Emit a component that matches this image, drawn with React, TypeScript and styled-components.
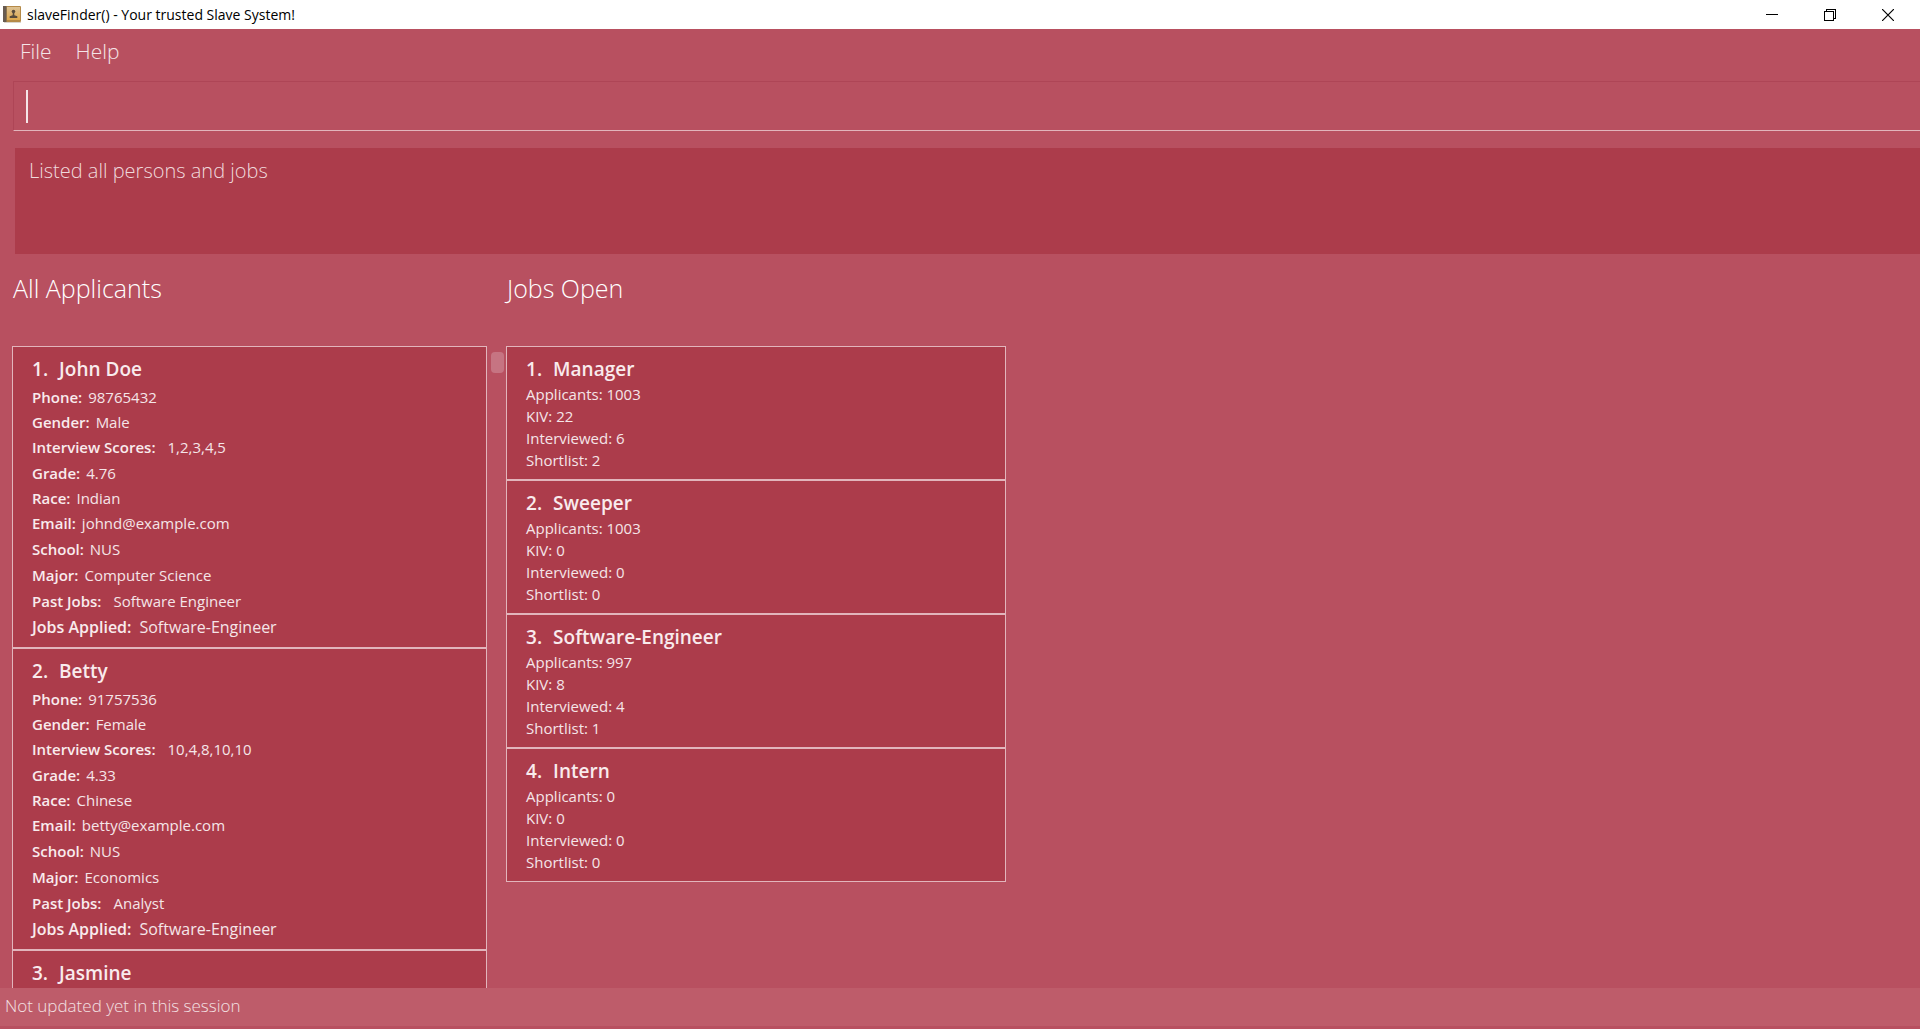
import React from "react";
import styled, { createGlobalStyle } from "styled-components";

const color = {
  base: "#b85060",
  panel: "#ac3c4b",
  status: "#be5c6a",
  line: "#e2b5bc",
  text: "#f5e5e8",
  strong: "#f9ebed",
  thumb: "#c67482",
};

const GlobalStyle = createGlobalStyle`
  *, *::before, *::after { box-sizing: border-box; }
  body {
    margin: 0;
    background: ${color.base};
    color: ${color.text};
    font-family: "Open Sans", "Noto Sans", sans-serif;
    font-size: 15px;
  }
  button, input { font: inherit; color: inherit; }
`;

const Window = styled.div`
  display: flex;
  flex-direction: column;
  height: 100vh;
  overflow: hidden;
`;

const TitleBar = styled.header`
  display: flex;
  align-items: center;
  flex: none;
  height: 29px;
  padding: 0 3px;
  background: #fff;
  color: #000;
`;

const AppTitle = styled.h1`
  flex: 1;
  margin: 0 0 0 6px;
  font-size: 14px;
  line-height: 28px;
  font-weight: 400;
`;

const WindowButton = styled.button`
  display: grid;
  place-items: center;
  width: 58px;
  height: 28px;
  padding: 0;
  border: 0;
  background: transparent;
`;

const MenuBar = styled.nav`
  display: flex;
  flex: none;
  gap: 24px;
  padding: 8px 20px 16px;
`;

const MenuButton = styled.button`
  padding: 0;
  border: 0;
  background: transparent;
  font-size: 21px;
  line-height: 28px;
  font-weight: 300;
`;

const CommandBox = styled.label`
  display: flex;
  align-items: center;
  flex: none;
  height: 50px;
  margin-left: 13px;
  padding-left: 12px;
  border: 1px solid #ae4556;
  border-right: 0;
  border-bottom-color: ${color.line};
`;

const Caret = styled.span`
  width: 2px;
  height: 33px;
  background: ${color.text};
`;

const CommandInput = styled.input`
  flex: 1;
  padding: 0;
  border: 0;
  outline: 0;
  background: transparent;
  font-size: 20px;
  font-weight: 300;
`;

const ResultDisplay = styled.output`
  display: block;
  flex: none;
  height: 106px;
  margin: 17px 0 0 15px;
  padding: 9px 14px;
  background: ${color.panel};
  color: #f0dadd;
  font-size: 20px;
  line-height: 28px;
  font-weight: 300;
`;

const Columns = styled.main`
  display: grid;
  grid-template-columns: 494fr 500fr 914fr;
  flex: 1;
  min-height: 0;
  padding-left: 12px;
`;

const Column = styled.section`
  display: flex;
  flex-direction: column;
  min-width: 0;
  min-height: 0;
`;

const ColumnTitle = styled.h2`
  flex: none;
  margin: 17px 0 40px;
  padding-left: 1px;
  color: #fff;
  font-size: 25px;
  line-height: 35px;
  font-weight: 300;
`;

const ListRow = styled.div`
  display: flex;
  flex: 1;
  min-height: 0;
`;

const CardList = styled.ol`
  flex: 1;
  margin: 0;
  padding: 0;
  overflow: hidden;
  list-style: none;
`;

const ScrollTrack = styled.div`
  width: 19px;
  padding: 6px 2px 0 4px;
`;

const ScrollThumb = styled.div`
  height: 21px;
  border-radius: 4px;
  background: ${color.thumb};
`;

const Card = styled.li`
  padding: 8px 19px 7px;
  border: 1px solid ${color.line};
  background: ${color.panel};
`;

const CardTitle = styled.h3<{ $gap: number }>`
  display: flex;
  gap: 11px;
  margin: 0 0 ${(p) => p.$gap}px;
  color: ${color.strong};
  font-size: 19px;
  line-height: 28px;
  font-weight: 600;
`;

const Fields = styled.dl`
  margin: 0;
`;

const Field = styled.div<{ $tall?: boolean; $gap?: number; $large?: boolean }>`
  display: flex;
  gap: ${(p) => p.$gap ?? 6}px;
  font-size: ${(p) => (p.$large ? 16 : 15)}px;
  line-height: ${(p) => (p.$tall ? 26 : 25)}px;
`;

const Label = styled.dt`
  color: ${color.strong};
  font-weight: 600;
`;

const Value = styled.dd`
  margin: 0;
`;

const Stats = styled.ul`
  margin: 0;
  padding: 0 0 1px;
  list-style: none;
  line-height: 22px;
`;

const StatusBar = styled.footer`
  flex: none;
  padding: 5px 5px 8px;
  background: ${color.status};
  border-bottom: 3px solid ${color.base};
  color: #f3e0e3;
  font-size: 17px;
  line-height: 25px;
  font-weight: 300;
`;

type Applicant = {
  name: string;
  phone: string;
  gender: string;
  scores: string;
  grade: string;
  race: string;
  email: string;
  school: string;
  major: string;
  past: string;
  applied: string;
};

const applicants: Applicant[] = [
  {
    name: "John Doe", phone: "98765432", gender: "Male", scores: "1,2,3,4,5", grade: "4.76",
    race: "Indian", email: "johnd@example.com", school: "NUS", major: "Computer Science",
    past: "Software Engineer", applied: "Software-Engineer",
  },
  {
    name: "Betty", phone: "91757536", gender: "Female", scores: "10,4,8,10,10", grade: "4.33",
    race: "Chinese", email: "betty@example.com", school: "NUS", major: "Economics",
    past: "Analyst", applied: "Software-Engineer",
  },
];

const jobs = [
  { title: "Manager", applicants: 1003, kiv: 22, interviewed: 6, shortlist: 2 },
  { title: "Sweeper", applicants: 1003, kiv: 0, interviewed: 0, shortlist: 0 },
  { title: "Software-Engineer", applicants: 997, kiv: 8, interviewed: 4, shortlist: 1 },
  { title: "Intern", applicants: 0, kiv: 0, interviewed: 0, shortlist: 0 },
];

function AddressBookIcon() {
  return (
    <svg width="18" height="17" viewBox="0 0 18 17" aria-hidden="true">
      <defs>
        <linearGradient id="cover" x1="0" y1="0" x2="0" y2="1">
          <stop offset="0" stopColor="#dcc193" />
          <stop offset="1" stopColor="#dea84c" />
        </linearGradient>
      </defs>
      <rect x="0" y="0" width="18" height="16" rx="1" fill="#b58a48" />
      <rect x="4" y="1" width="13" height="13" fill="url(#cover)" />
      <rect x="0" y="0" width="3" height="16" fill="#675b50" />
      <rect x="3" y="0" width="1" height="16" fill="#8d744c" />
      <rect x="1" y="16" width="17" height="1" fill="#d9d4cc" />
      <circle cx="10.5" cy="5.5" r="1.8" fill="#574a3c" />
      <path d="M9.7 7h1.6v2.2l3 1V12H6.700v-1.800l3-1z" fill="#574a3c" />
    </svg>
  );
}

function ApplicantCard({ index, person }: { index: number; person: Applicant }) {
  return (
    <Card>
      <CardTitle $gap={2}><span>{index}.</span><span>{person.name}</span></CardTitle>
      <Fields>
        <Field><Label>Phone:</Label><Value>{person.phone}</Value></Field>
        <Field><Label>Gender:</Label><Value>{person.gender}</Value></Field>
        <Field $gap={12}><Label>Interview Scores:</Label><Value>{person.scores}</Value></Field>
        <Field $tall><Label>Grade:</Label><Value>{person.grade}</Value></Field>
        <Field><Label>Race:</Label><Value>{person.race}</Value></Field>
        <Field><Label>Email:</Label><Value>{person.email}</Value></Field>
        <Field $tall><Label>School:</Label><Value>{person.school}</Value></Field>
        <Field $tall><Label>Major:</Label><Value>{person.major}</Value></Field>
        <Field $tall $gap={12}><Label>Past Jobs:</Label><Value>{person.past}</Value></Field>
        <Field $tall $large $gap={8}><Label>Jobs Applied:</Label><Value>{person.applied}</Value></Field>
      </Fields>
    </Card>
  );
}

export default function App() {
  return (
    <>
      <GlobalStyle />
      <Window>
        <TitleBar>
          <AddressBookIcon />
          <AppTitle>slaveFinder() - Your trusted Slave System!</AppTitle>
          <WindowButton aria-label="Minimize">
            <svg width="12" height="12" shapeRendering="crispEdges"><path d="M0 5.5h12" stroke="#000" /></svg>
          </WindowButton>
          <WindowButton aria-label="Restore">
            <svg width="12" height="12" fill="none" stroke="#000" shapeRendering="crispEdges">
              <path d="M.5 2.5h9v9h-9zM2.5 2.5v-2h9v9h-2" />
            </svg>
          </WindowButton>
          <WindowButton aria-label="Close">
            <svg width="12" height="12" stroke="#000" strokeWidth="1.2"><path d="M0 0l12 12M12 0L0 12" /></svg>
          </WindowButton>
        </TitleBar>
        <MenuBar>
          <MenuButton>File</MenuButton>
          <MenuButton>Help</MenuButton>
        </MenuBar>
        <CommandBox>
          <Caret />
          <CommandInput type="text" aria-label="Command" />
        </CommandBox>
        <ResultDisplay>Listed all persons and jobs</ResultDisplay>
        <Columns>
          <Column>
            <ColumnTitle>All Applicants</ColumnTitle>
            <ListRow>
              <CardList>
                {applicants.map((person, i) => (
                  <ApplicantCard key={person.name} index={i + 1} person={person} />
                ))}
                <Card>
                  <CardTitle $gap={2}><span>3.</span><span>Jasmine</span></CardTitle>
                </Card>
              </CardList>
              <ScrollTrack><ScrollThumb /></ScrollTrack>
            </ListRow>
          </Column>
          <Column>
            <ColumnTitle>Jobs Open</ColumnTitle>
            <CardList>
              {jobs.map((job, i) => (
                <Card key={job.title}>
                  <CardTitle $gap={0}><span>{i + 1}.</span><span>{job.title}</span></CardTitle>
                  <Stats>
                    <li>Applicants: {job.applicants}</li>
                    <li>KIV: {job.kiv}</li>
                    <li>Interviewed: {job.interviewed}</li>
                    <li>Shortlist: {job.shortlist}</li>
                  </Stats>
                </Card>
              ))}
            </CardList>
          </Column>
        </Columns>
        <StatusBar>Not updated yet in this session</StatusBar>
      </Window>
    </>
  );
}
